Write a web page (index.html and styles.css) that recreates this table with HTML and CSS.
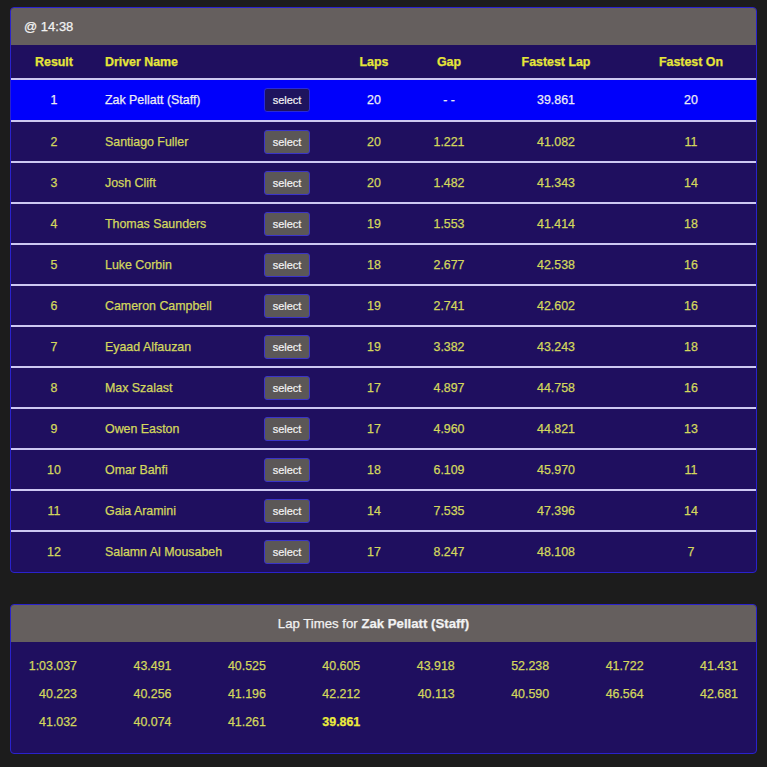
FILE: index.html
```html
<!DOCTYPE html>
<html>
<head>
<meta charset="utf-8">
<link rel="stylesheet" href="styles.css">
</head>
<body>
<div class="page">
  <section class="card results">
    <div class="card-head">@ 14:38</div>
    <div class="grid head-row">
      <div class="c">Result</div>
      <div class="l">Driver Name</div>
      <div></div>
      <div class="c">Laps</div>
      <div class="c">Gap</div>
      <div class="c">Fastest Lap</div>
      <div class="c">Fastest On</div>
    </div>
    <div class="grid row active">
      <div class="c">1</div><div class="l">Zak Pellatt (Staff)</div><div class="b"><button class="sel">select</button></div>
      <div class="c">20</div><div class="c">- -</div><div class="c">39.861</div><div class="c">20</div>
    </div>
    <div class="grid row">
      <div class="c">2</div><div class="l">Santiago Fuller</div><div class="b"><button class="sel">select</button></div>
      <div class="c">20</div><div class="c">1.221</div><div class="c">41.082</div><div class="c">11</div>
    </div>
    <div class="grid row">
      <div class="c">3</div><div class="l">Josh Clift</div><div class="b"><button class="sel">select</button></div>
      <div class="c">20</div><div class="c">1.482</div><div class="c">41.343</div><div class="c">14</div>
    </div>
    <div class="grid row">
      <div class="c">4</div><div class="l">Thomas Saunders</div><div class="b"><button class="sel">select</button></div>
      <div class="c">19</div><div class="c">1.553</div><div class="c">41.414</div><div class="c">18</div>
    </div>
    <div class="grid row">
      <div class="c">5</div><div class="l">Luke Corbin</div><div class="b"><button class="sel">select</button></div>
      <div class="c">18</div><div class="c">2.677</div><div class="c">42.538</div><div class="c">16</div>
    </div>
    <div class="grid row">
      <div class="c">6</div><div class="l">Cameron Campbell</div><div class="b"><button class="sel">select</button></div>
      <div class="c">19</div><div class="c">2.741</div><div class="c">42.602</div><div class="c">16</div>
    </div>
    <div class="grid row">
      <div class="c">7</div><div class="l">Eyaad Alfauzan</div><div class="b"><button class="sel">select</button></div>
      <div class="c">19</div><div class="c">3.382</div><div class="c">43.243</div><div class="c">18</div>
    </div>
    <div class="grid row">
      <div class="c">8</div><div class="l">Max Szalast</div><div class="b"><button class="sel">select</button></div>
      <div class="c">17</div><div class="c">4.897</div><div class="c">44.758</div><div class="c">16</div>
    </div>
    <div class="grid row">
      <div class="c">9</div><div class="l">Owen Easton</div><div class="b"><button class="sel">select</button></div>
      <div class="c">17</div><div class="c">4.960</div><div class="c">44.821</div><div class="c">13</div>
    </div>
    <div class="grid row">
      <div class="c">10</div><div class="l">Omar Bahfi</div><div class="b"><button class="sel">select</button></div>
      <div class="c">18</div><div class="c">6.109</div><div class="c">45.970</div><div class="c">11</div>
    </div>
    <div class="grid row">
      <div class="c">11</div><div class="l">Gaia Aramini</div><div class="b"><button class="sel">select</button></div>
      <div class="c">14</div><div class="c">7.535</div><div class="c">47.396</div><div class="c">14</div>
    </div>
    <div class="grid row">
      <div class="c">12</div><div class="l">Salamn Al Mousabeh</div><div class="b"><button class="sel">select</button></div>
      <div class="c">17</div><div class="c">8.247</div><div class="c">48.108</div><div class="c">7</div>
    </div>
  </section>

  <section class="card laps">
    <div class="card-head center">Lap Times for <b>Zak Pellatt (Staff)</b></div>
    <div class="lap-grid">
      <span>1:03.037</span><span>43.491</span><span>40.525</span><span>40.605</span>
      <span>43.918</span><span>52.238</span><span>41.722</span><span>41.431</span>
      <span>40.223</span><span>40.256</span><span>41.196</span><span>42.212</span>
      <span>40.113</span><span>40.590</span><span>46.564</span><span>42.681</span>
      <span>41.032</span><span>40.074</span><span>41.261</span><span class="best">39.861</span>
    </div>
  </section>
</div>
</body>
</html>
```

FILE: styles.css
```css
html, body {
  margin: 0;
  padding: 0;
  background: #1c1c1c;
}
body {
  font-family: "Liberation Sans", Arial, sans-serif;
  font-size: 12.4px;
  -webkit-text-stroke: 0.25px currentColor;
}
.page {
  padding: 7px 10px 0 10px;
  display: flex;
  flex-direction: column;
  gap: 31px;
}
.card {
  background: #1f0f5f;
  border: 1px solid #2a22cc;
  border-radius: 4px;
  overflow: hidden;
}
.results { padding-bottom: 1px; }
.card-head {
  background: #655f5e;
  color: #f2f2f2;
  font-size: 13px;
  height: 37px;
  line-height: 37px;
  padding-left: 13px;
}
.card-head.center {
  text-align: center;
  padding-left: 0;
  padding-right: 20px;
  height: 37px;
  line-height: 37px;
  font-size: 13.2px;
}
.card-head b { font-weight: bold; }

.grid {
  display: grid;
  grid-template-columns: 86px 160px 79px 76px 74px 140px 130px;
  align-items: center;
}
.grid .c { text-align: center; }
.grid .l { padding-left: 8px; }
.grid .b { padding-left: 7px; display: flex; }

.head-row {
  height: 33px;
  color: #e6e638;
  font-weight: bold;
  border-bottom: 2px solid #cdc8f2;
}
.row {
  height: 39px;
  color: #d3d75c;
  border-top: 2px solid #cdc8f2;
}
.head-row + .row { border-top: 0; height: 40px; }
.row.active {
  background: #0000fb;
  color: #ececf4;
}
.sel {
  width: 46px;
  height: 24px;
  padding: 0;
  margin: 0;
  background: #5b5757;
  color: #f4f4f4;
  border: 1px solid #3a34c8;
  border-radius: 3px;
  font-family: "Liberation Sans", Arial, sans-serif;
  font-size: 11px;
  -webkit-text-stroke: 0.2px currentColor;
}
.row.active .sel {
  background: #1e145e;
  border-color: #2a2ad8;
}

.lap-grid {
  display: grid;
  grid-template-columns: repeat(8, 60px);
  column-gap: 34.43px;
  grid-auto-rows: 28px;
  align-items: center;
  padding: 10px 0 17px 6px;
  color: #d3d75c;
}
.lap-grid span { text-align: right; }
.lap-grid .best {
  font-weight: bold;
  color: #ecec3c;
}
```
